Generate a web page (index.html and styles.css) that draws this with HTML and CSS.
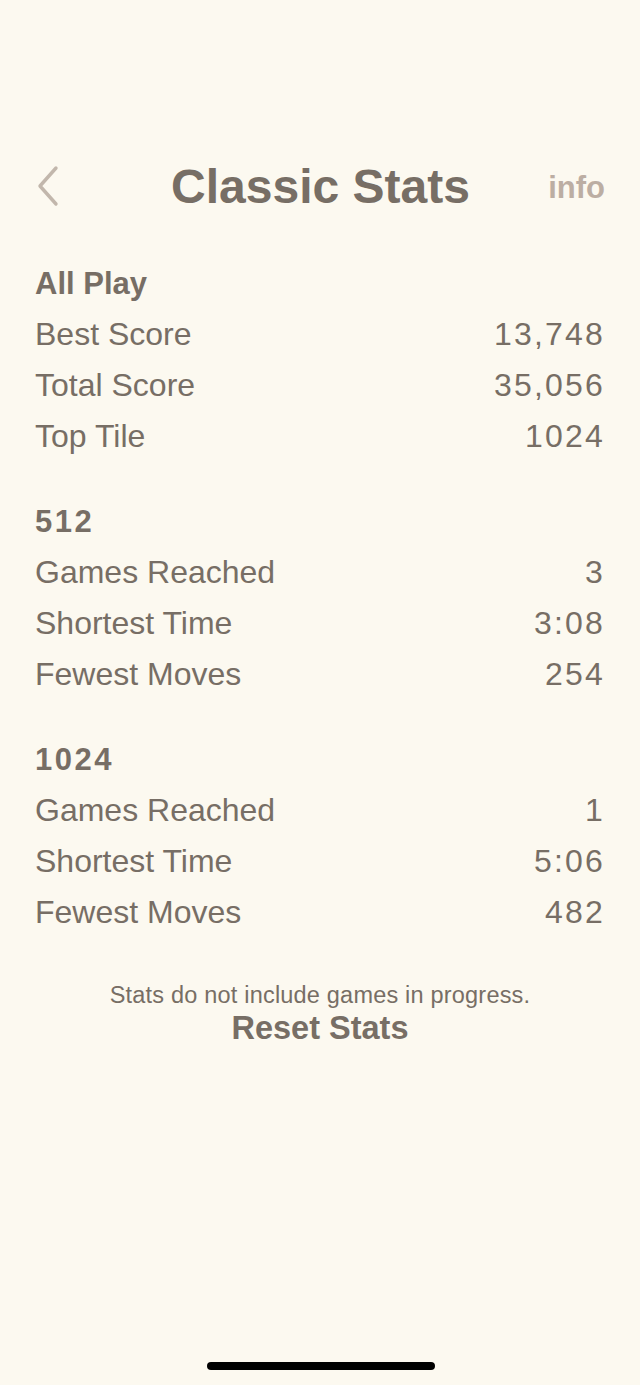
FILE: index.html
```html
<!DOCTYPE html>
<html lang="en">
<head>
  <meta charset="UTF-8" />
  <meta name="viewport" content="width=device-width, initial-scale=1.0" />
  <title>Classic Stats</title>
  <link rel="stylesheet" href="styles.css">
</head>
<body>
  <div class="screen">
    <header class="topbar">
      <a class="back" href="#">
        <svg width="24" height="42" viewBox="0 0 24 42">
          <polyline points="19,3 3,21 19,39" fill="none" stroke="#c2b7ac" stroke-width="3.4" stroke-linecap="round" stroke-linejoin="round" />
        </svg>
      </a>
      <h1>Classic Stats</h1>
      <a class="info" href="#">info</a>
    </header>

    <section class="group">
      <h2>All Play</h2>
      <div class="row"><span>Best Score</span><span class="val">13,748</span></div>
      <div class="row"><span>Total Score</span><span class="val">35,056</span></div>
      <div class="row"><span>Top Tile</span><span class="val">1024</span></div>
    </section>

    <section class="group">
      <h2 class="num">512</h2>
      <div class="row"><span>Games Reached</span><span class="val">3</span></div>
      <div class="row"><span>Shortest Time</span><span class="val">3:08</span></div>
      <div class="row"><span>Fewest Moves</span><span class="val">254</span></div>
    </section>

    <section class="group">
      <h2 class="num">1024</h2>
      <div class="row"><span>Games Reached</span><span class="val">1</span></div>
      <div class="row"><span>Shortest Time</span><span class="val">5:06</span></div>
      <div class="row"><span>Fewest Moves</span><span class="val">482</span></div>
    </section>

    <div class="foot">
      <p class="note">Stats do not include games in progress.</p>
      <a class="reset" href="#">Reset Stats</a>
    </div>

    <div class="home-bar"></div>
  </div>
</body>
</html>
```

FILE: styles.css
```css
body {
  margin: 0;
  background-color: #fcf9f0;
  font-family: "Liberation Sans", Arial, sans-serif;
  color: #776e65;
}
.screen {
  position: relative;
  min-height: 1385px;
  padding: 150px 35px 0 35px;
  box-sizing: border-box;
}
.topbar {
  height: 72px;
  display: flex;
  align-items: center;
  justify-content: space-between;
}
.back {
  display: flex;
  width: 64px;
  margin-left: 2px;
}
.topbar h1 {
  margin: 0;
  font-size: 48px;
  font-weight: bold;
  color: #776e65;
}
.info {
  width: 65px;
  padding-top: 4px;
  text-align: right;
  font-size: 31px;
  font-weight: 600;
  color: #bcaea3;
  text-decoration: none;
}
.group {
  margin-top: 36px;
}
.group + .group {
  margin-top: 34px;
}
.group h2 {
  margin: 0;
  font-size: 31px;
  font-weight: bold;
  line-height: 51px;
}
.group h2.num {
  letter-spacing: 2.5px;
}
.row {
  display: flex;
  justify-content: space-between;
  font-size: 32px;
  line-height: 51px;
}
.row .val {
  letter-spacing: 2.2px;
}
.foot {
  margin-top: 44px;
  text-align: center;
}
.note {
  margin: 0;
  font-size: 23.5px;
  letter-spacing: 0.2px;
  line-height: 26px;
}
.reset {
  display: block;
  margin-top: 2px;
  font-size: 32.5px;
  font-weight: bold;
  line-height: 36px;
  color: #776e65;
  text-decoration: none;
}
.home-bar {
  position: absolute;
  left: 207px;
  bottom: 15px;
  width: 228px;
  height: 8px;
  border-radius: 4px;
  background: #000;
}
```
